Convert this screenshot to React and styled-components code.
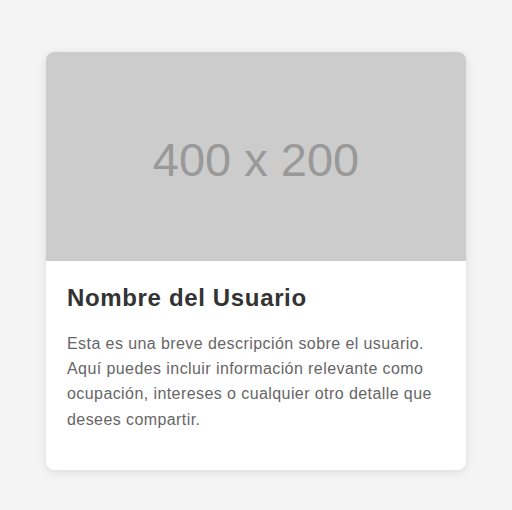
import React from "react";
import styled, { createGlobalStyle } from "styled-components";

const Global = createGlobalStyle`
  html, body { margin: 0; padding: 0; }
  body {
    background: #f4f4f4;
    font-family: "Liberation Sans", Arial, sans-serif;
  }
`;

const Page = styled.div`
  display: flex;
  justify-content: center;
  padding-top: 52px;
  padding-bottom: 40px;
`;

const Card = styled.div`
  width: 420px;
  background: #fff;
  border-radius: 8px;
  overflow: hidden;
  box-shadow: 0 2px 10px rgba(0, 0, 0, 0.1);
`;

const Placeholder = styled.div`
  height: 209px;
  background: #cccccc;
  color: #999999;
  display: flex;
  align-items: center;
  justify-content: center;
  font-size: 47px;
  padding-top: 6px;
  box-sizing: border-box;
`;

const Body = styled.div`
  padding: 23px 20px 20px 21px;
`;

const Title = styled.h2`
  margin: 0 0 18px;
  font-size: 24px;
  letter-spacing: 0.65px;
  font-weight: bold;
  color: #333;
  line-height: 1.2;
`;

const Text = styled.p`
  margin: 0 0 18px;
  font-size: 16px;
  letter-spacing: 0.42px;
  line-height: 1.58;
  color: #666;
`;

export default function App() {
  return (
    <>
      <Global />
      <Page>
        <Card>
          <Placeholder>400 x 200</Placeholder>
          <Body>
            <Title>Nombre del Usuario</Title>
            <Text>
              Esta es una breve descripción sobre el usuario. Aquí puedes incluir
              información relevante como ocupación, intereses o cualquier otro
              detalle que desees compartir.
            </Text>
          </Body>
        </Card>
      </Page>
    </>
  );
}
